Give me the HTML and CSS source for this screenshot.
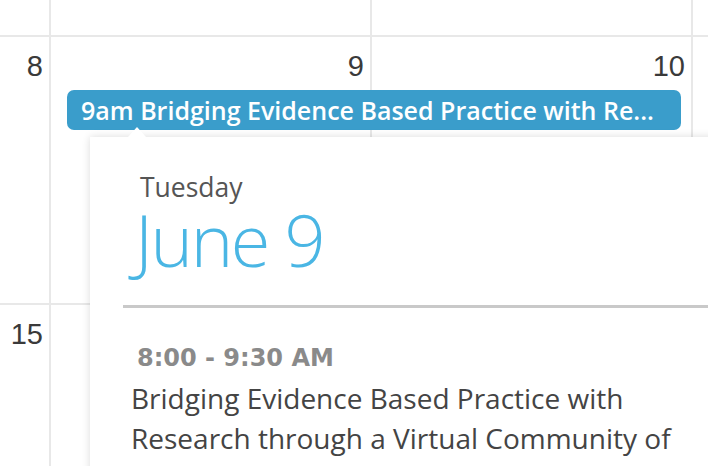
FILE: index.html
```html
<!DOCTYPE html>
<html>
<head>
<meta charset="utf-8">
<link rel="stylesheet" href="styles.css">
</head>
<body>
<div class="calendar">
  <div class="cell"></div>
  <div class="cell"></div>
  <div class="cell"></div>
  <div class="cell last"></div>

  <div class="cell day"><span class="num">8</span></div>
  <div class="cell day"><span class="num">9</span></div>
  <div class="cell day"><span class="num">10</span></div>
  <div class="cell day last"></div>

  <div class="cell day"><span class="num">15</span></div>
  <div class="cell day"></div>
  <div class="cell day"></div>
  <div class="cell day last"></div>
</div>

<div class="event-bar">9am Bridging Evidence Based Practice with Re...</div>

<div class="popup">
  <div class="caret"></div>
  <div class="weekday">Tuesday</div>
  <div class="date">June 9</div>
  <div class="sep"></div>
  <div class="item">
    <div class="time">8:00 - 9:30 AM</div>
    <div class="title">Bridging Evidence Based Practice with Research through a Virtual Community of</div>
  </div>
</div>
</body>
</html>
```

FILE: styles.css
```css
html, body {
  margin: 0;
  padding: 0;
  background: #fff;
  overflow: hidden;
  width: 708px;
  height: 466px;
}

.calendar {
  display: grid;
  grid-template-columns: 51px 321px 321px 1fr;
  grid-template-rows: 37px 268px 200px;
}

.cell {
  border-right: 2px solid #e8e8e8;
  border-bottom: 2px solid #e8e8e8;
  display: flex;
  justify-content: flex-end;
  align-items: flex-start;
}

.cell.last {
  border-right: none;
}

.num {
  font-family: "Liberation Sans", Arial, sans-serif;
  font-size: 29px;
  color: #3a3a3a;
  padding: 12px 6px 0 0;
  line-height: 34px;
}

.event-bar {
  position: absolute;
  left: 67px;
  top: 90px;
  width: 614px;
  height: 40px;
  box-sizing: border-box;
  background: #3a9dcb;
  border-radius: 7px;
  color: #fff;
  font-family: "Open Sans", sans-serif;
  font-weight: 600;
  font-size: 25px;
  line-height: 40px;
  padding-left: 14px;
  white-space: nowrap;
  overflow: hidden;
}

.popup {
  position: absolute;
  left: 90px;
  top: 137px;
  width: 660px;
  height: 360px;
  background: #fff;
  box-shadow: 0 0 8px rgba(0,0,0,0.14);
  box-sizing: border-box;
  padding-top: 34px;
}

.caret {
  position: absolute;
  left: 38px;
  top: -10px;
  width: 0;
  height: 0;
  border-left: 9px solid transparent;
  border-right: 9px solid transparent;
  border-bottom: 10px solid #fff;
}

.weekday {
  font-family: "Open Sans", sans-serif;
  font-size: 26.5px;
  color: #555;
  margin-left: 50px;
  line-height: 32px;
}

.date {
  font-family: "Open Sans", sans-serif;
  font-weight: 300;
  font-size: 72px;
  color: #4ab6e4;
  margin-left: 45px;
  line-height: 72px;
  letter-spacing: -2.3px;
}

.sep {
  margin-left: 33px;
  margin-top: 30px;
  height: 3px;
  background: #c9c9c9;
}

.item {
  margin-left: 41px;
  margin-top: 34px;
}

.time {
  font-family: "DejaVu Sans", sans-serif;
  font-weight: 700;
  font-size: 24px;
  color: #8a8a8a;
  line-height: 32px;
  margin-left: 6px;
}

.title {
  font-family: "Open Sans", sans-serif;
  font-size: 28px;
  color: #444;
  line-height: 40px;
  width: 580px;
  margin-top: 4px;
}
```
